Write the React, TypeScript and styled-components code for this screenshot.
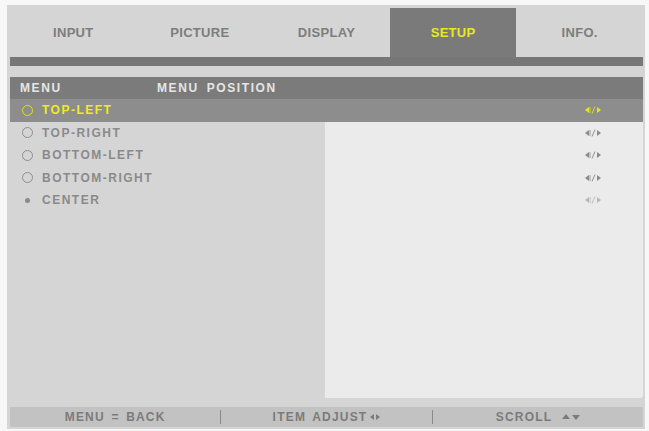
import React from "react";
import styled, { createGlobalStyle } from "styled-components";

const GlobalStyle = createGlobalStyle`
  html, body {
    margin: 0;
    padding: 0;
    background: #f7f7f7;
  }
  body {
    font-family: "Liberation Sans", Arial, sans-serif;
  }
`;

const Frame = styled.div`
  margin: 5px 0 0 7px;
  width: 638px;
  height: 424px;
  box-sizing: border-box;
  padding: 0 2px 2px 3px;
  background: #d5d5d5;
  display: flex;
  flex-direction: column;
`;

const Tabs = styled.div`
  display: grid;
  grid-template-columns: repeat(5, 1fr);
  height: 52px;
  align-items: end;
`;

const Tab = styled.div<{ $active?: boolean }>`
  height: 49px;
  display: flex;
  align-items: center;
  justify-content: center;
  font-size: 13px;
  font-weight: bold;
  letter-spacing: 0.3px;
  color: ${(p) => (p.$active ? "#e9e91c" : "#7d7d7d")};
  background: ${(p) => (p.$active ? "#7a7a7a" : "transparent")};
`;

const TabBand = styled.div`
  height: 9px;
  background: #777;
  margin-bottom: 11px;
`;

const Header = styled.div`
  height: 22px;
  background: #7b7b7b;
  display: flex;
  align-items: center;
  padding-left: 10px;
  font-size: 12px;
  font-weight: bold;
  letter-spacing: 1.6px;
  color: #e6e6e6;
  word-spacing: 3px;
`;

const HeaderCell = styled.div<{ $w?: number }>`
  width: ${(p) => (p.$w ? `${p.$w}px` : "auto")};
`;

const Body = styled.div`
  flex: 1;
  display: grid;
  grid-template-columns: 315px 1fr;
  margin-bottom: 9px;
`;

const Column = styled.div<{ $panel?: boolean }>`
  display: flex;
  flex-direction: column;
  background: ${(p) => (p.$panel ? "#ebebeb" : "transparent")};
  border-bottom-right-radius: ${(p) => (p.$panel ? "3px" : "0")};
`;

const Row = styled.div<{ $selected?: boolean }>`
  height: 22.5px;
  display: flex;
  align-items: center;
  background: ${(p) => (p.$selected ? "#8d8d8d" : "transparent")};
`;

const ItemRow = styled(Row)`
  padding-left: 12px;
  gap: 9px;
  font-size: 12px;
  font-weight: bold;
  letter-spacing: 1.5px;
  color: ${(p) => (p.$selected ? "#ecec1e" : "#8a8a8a")};
`;

const ArrowRow = styled(Row)`
  justify-content: flex-end;
  padding-right: 42px;
`;

const Radio = styled.span<{ $filled?: boolean; $selected?: boolean }>`
  width: 11px;
  height: 11px;
  box-sizing: border-box;
  display: flex;
  align-items: center;
  justify-content: center;
  border-radius: 50%;
  border: ${(p) =>
    p.$filled ? "none" : `1px solid ${p.$selected ? "#e0e01c" : "#8f8f8f"}`};
  &::after {
    content: "";
    display: ${(p) => (p.$filled ? "block" : "none")};
    width: 5px;
    height: 5px;
    border-radius: 50%;
    background: #8a8a8a;
  }
`;

const Bottom = styled.div`
  height: 20px;
  background: #c2c2c2;
  display: flex;
  align-items: center;
  font-size: 12px;
  font-weight: bold;
  letter-spacing: 1.2px;
  color: #7b7b7b;
  word-spacing: 2px;
`;

const BottomCell = styled.div`
  flex: 1;
  display: flex;
  align-items: center;
  justify-content: center;
  gap: 3px;
`;

const Sep = styled.div`
  width: 1px;
  height: 14px;
  background: #8a8a8a;
`;

function AdjustIcon({ color }: { color: string }) {
  return (
    <svg width="16" height="8" viewBox="0 0 16 8">
      <polygon points="0,4 4,1 4,7" fill={color} />
      <line x1="5" y1="1" x2="5" y2="7" stroke={color} strokeWidth="0.8" />
      <line x1="7" y1="7.5" x2="10" y2="0.5" stroke={color} strokeWidth="0.9" />
      <polygon points="16,4 12,1 12,7" fill={color} />
    </svg>
  );
}

function LeftRight() {
  return (
    <svg width="10" height="8" viewBox="0 0 10 8">
      <polygon points="0,4 4,1 4,7" fill="#7b7b7b" />
      <polygon points="10,4 6,1 6,7" fill="#7b7b7b" />
    </svg>
  );
}

function UpDown() {
  return (
    <svg width="18" height="8" viewBox="0 0 18 8">
      <polygon points="4,1 0,6 8,6" fill="#7b7b7b" />
      <polygon points="10,2 18,2 14,7" fill="#7b7b7b" />
    </svg>
  );
}

const tabs = ["INPUT", "PICTURE", "DISPLAY", "SETUP", "INFO."];
const items = [
  { label: "TOP-LEFT", selected: true },
  { label: "TOP-RIGHT" },
  { label: "BOTTOM-LEFT" },
  { label: "BOTTOM-RIGHT" },
  { label: "CENTER", current: true },
];

export default function App() {
  return (
    <>
      <GlobalStyle />
      <Frame>
        <Tabs>
          {tabs.map((t) => (
            <Tab key={t} $active={t === "SETUP"}>
              {t}
            </Tab>
          ))}
        </Tabs>
        <TabBand />
        <Header>
          <HeaderCell $w={137}>MENU</HeaderCell>
          <HeaderCell>MENU POSITION</HeaderCell>
        </Header>
        <Body>
          <Column>
            {items.map((it) => (
              <ItemRow key={it.label} $selected={it.selected}>
                <Radio $filled={it.current} $selected={it.selected} />
                {it.label}
              </ItemRow>
            ))}
          </Column>
          <Column $panel>
            {items.map((it) => (
              <ArrowRow key={it.label} $selected={it.selected}>
                <AdjustIcon
                  color={
                    it.selected ? "#e6e61a" : it.current ? "#b8b8b8" : "#8a8a8a"
                  }
                />
              </ArrowRow>
            ))}
          </Column>
        </Body>
        <Bottom>
          <BottomCell>MENU = BACK</BottomCell>
          <Sep />
          <BottomCell>
            ITEM ADJUST
            <LeftRight />
          </BottomCell>
          <Sep />
          <BottomCell>
            SCROLL&nbsp;
            <UpDown />
          </BottomCell>
        </Bottom>
      </Frame>
    </>
  );
}
